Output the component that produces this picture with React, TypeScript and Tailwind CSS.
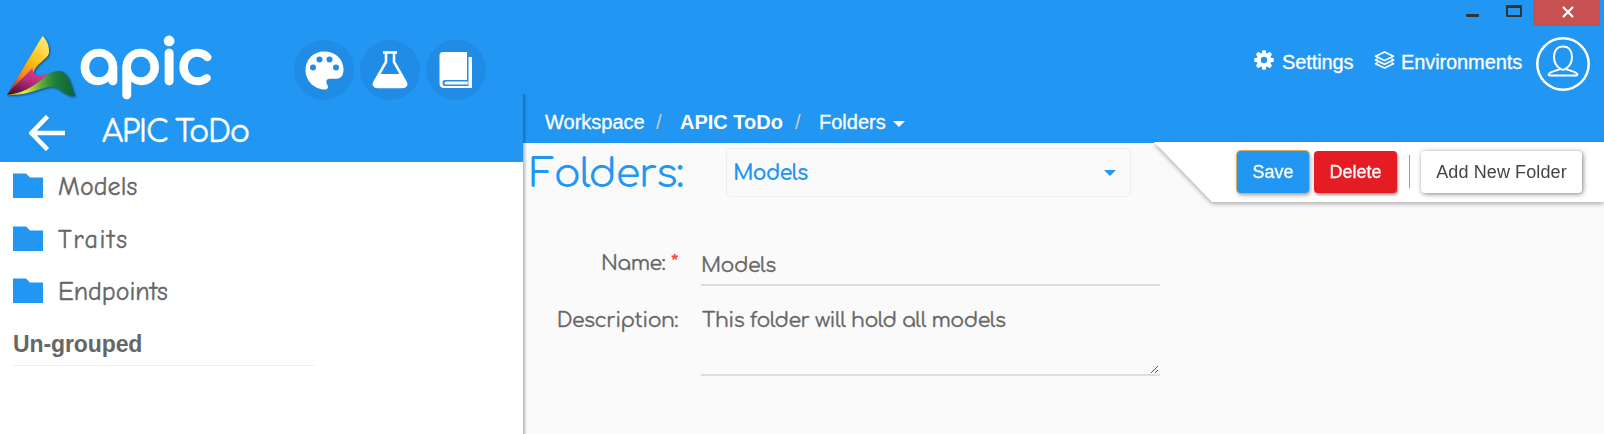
import React from "react";

const ROUND = "font-['Comfortaa','Quicksand','Lato',sans-serif]";

function Logo() {
  return (
    <svg width="72" height="64" viewBox="0 0 72 64" className="drop-shadow-[1px_1px_1px_rgba(0,0,0,0.5)]">
      <defs>
        <linearGradient id="flame" x1="0.8" y1="0" x2="0.2" y2="1">
          <stop offset="0" stopColor="#ffe873" />
          <stop offset="0.4" stopColor="#fdbe10" />
          <stop offset="0.7" stopColor="#f58220" />
          <stop offset="1" stopColor="#a01c2c" />
        </linearGradient>
        <linearGradient id="petal" x1="0.8" y1="0.1" x2="0" y2="1">
          <stop offset="0" stopColor="#e8408c" />
          <stop offset="0.45" stopColor="#b02a78" />
          <stop offset="1" stopColor="#2c0a2a" />
        </linearGradient>
        <linearGradient id="leaf" x1="0" y1="0.6" x2="1" y2="0.6">
          <stop offset="0" stopColor="#8a9a1a" />
          <stop offset="0.25" stopColor="#e8ee3a" />
          <stop offset="0.5" stopColor="#5cab3c" />
          <stop offset="0.7" stopColor="#1d7f3c" />
          <stop offset="1" stopColor="#0c6438" />
        </linearGradient>
      </defs>
      <path d="M35.500 0C40 4 42.500 10 42 17C41 23 28 28 26.500 37C20 43 10 51 0 59C8 46 18 29 35.500 0Z" fill="url(#flame)" />
      <path d="M25.500 32C25.500 37 28 39.500 34 39.500L46 37C36 49 18 58 0 59C8 49 18 40 25.500 32Z" fill="url(#petal)" />
      <path d="M0 59C16 57 26 51 35 43C43 36 51 33 57 36.500C63 41 65 52 68 60C56 61 53 49 42 51C30 53 20 60 0 59Z" fill="url(#leaf)" />
    </svg>
  );
}

function Palette() {
  return (
    <svg width="39" height="39" viewBox="0 0 39 39">
      <path d="M19 .5C8.500.5.5 8.500.5 19S9 38.500 20 38.500c2.500 0 3.200-1.500 2.800-3.300-.5-1.700-2-3.500-1.300-5.400.7-2 2.500-2 5-2h5c5 0 7.200-4.500 7-9.800C38 7.500 30 .5 19 .5Z" fill="#fff" />
      <g fill="#218ce5">
        <circle cx="8" cy="16.500" r="3" />
        <circle cx="14.500" cy="8.500" r="3" />
        <circle cx="24.500" cy="8.500" r="3" />
        <circle cx="31" cy="16.500" r="3" />
      </g>
    </svg>
  );
}

function Flask() {
  return (
    <svg width="36" height="38" viewBox="0 0 36 38">
      <path d="M11 1.500h14" stroke="#fff" strokeWidth="2.500" />
      <path d="M14 1v10L2.500 31c-1.500 3 0 5 3 5h25c3 0 4.500-2 3-5L22 11V1" fill="none" stroke="#fff" strokeWidth="2.600" />
      <path d="M7.500 23h21l5 9c1 3 0 4-3 4h-25c-3 0-4-1-3-4Z" fill="#fff" />
    </svg>
  );
}

function Book() {
  return (
    <svg width="34" height="38" viewBox="0 0 34 38">
      <path d="M4 1h24v28H6q-2.500 0-2.500 3T6 35h23.500V6H33v31H5q-4.500 0-4.500-5V4.500Q.5 1 4 1Z" fill="#fff" />
      <path d="M28.800 30.600H7a1.500 1.500 0 0 0 0 3h21.800Z" fill="#fff" />
    </svg>
  );
}

function Gear() {
  return (
    <svg width="20" height="20" viewBox="-10 -10 20 20" fill="#fff">
      <path fillRule="evenodd" d="M-7.200 0a7.200 7.200 0 1 0 14.400 0a7.200 7.200 0 1 0-14.400 0M-3.200 0a3.200 3.200 0 1 1 6.400 0a3.200 3.200 0 1 1-6.400 0" />
      {[0, 45, 90, 135, 180, 225, 270, 315].map((a) => (
        <path key={a} d="M-2.400-6L-1.700-9.800H1.700L2.400-6Z" transform={`rotate(${a})`} />
      ))}
    </svg>
  );
}

function Layers() {
  return (
    <svg width="21" height="18" viewBox="0 0 21 18" fill="none" stroke="#fff" strokeWidth="1.700" strokeLinejoin="round">
      <path d="M10.500 1L19.500 5.200L10.500 9.500L1.500 5.200Z" />
      <path d="M3.500 8L1.500 9L10.500 13.200L19.500 9L17.500 8" />
      <path d="M3.500 11.700L1.500 12.700L10.500 17L19.500 12.700L17.500 11.700" />
    </svg>
  );
}

function Avatar() {
  return (
    <svg width="54" height="54" viewBox="0 0 54 54" fill="none" stroke="#fff">
      <circle cx="27" cy="27" r="25.700" strokeWidth="2.500" />
      <path d="M24 31.500C20 29 18 25 18 20C18 13.500 21.500 9.500 27 9.500S36 13.500 36 20C36 25 34 29 30 31.500C30.500 33.500 40 34 41.500 37.500Q41.500 38.500 40 38.500H14Q12.500 38.500 12.500 37.500C14 34 23.500 33.500 24 31.500Q27 34 30 31.500" strokeWidth="2" />
    </svg>
  );
}

function Folder() {
  return (
    <svg width="30" height="25" viewBox="0 0 30 25">
      <path d="M0 .5H13L17 4.500H30V25H0Z" fill="#2196f3" />
    </svg>
  );
}

function RoundButton({ children }: { children: React.ReactNode }) {
  return <div className="flex h-[60px] w-[60px] items-center justify-center rounded-full bg-[#218ce5]">{children}</div>;
}

function FolderItem({ name, className }: { name: string; className: string }) {
  return (
    <li className="flex h-[52.500px] items-start">
      <Folder />
      <span className={`mt-[-1px] ml-[15px] font-['Comic_Neue','Lato',sans-serif] text-[26px] leading-[30px] text-[#666] [font-variant-ligatures:none] [-webkit-text-stroke:0.4px_#666] ${className}`}>{name}</span>
    </li>
  );
}

export default function App() {
  return (
    <div className="flex h-[434px] w-[1604px] flex-col overflow-hidden bg-white font-['Liberation_Sans',Arial,sans-serif]">
      <header className="relative z-10 flex h-[94px] shrink-0 justify-between bg-[#2196f3] text-white">
        <div className="flex">
          <div className="mt-[36px] ml-[7px] w-[71px]">
            <Logo />
          </div>
          <span className={`${ROUND} mt-[22px] w-[216px] text-[62px] leading-[85px] font-bold tracking-[-1.800px] [-webkit-text-stroke:2.500px_#fff]`}>apic</span>
          <div className="mt-[40px] flex gap-[6px]">
            <RoundButton><Palette /></RoundButton>
            <RoundButton><Flask /></RoundButton>
            <RoundButton><Book /></RoundButton>
          </div>
        </div>
        <div className="flex flex-col items-end">
          <div className="mr-1 flex h-[26px]">
            <div className="mt-[14px] mr-[27px] h-[3px] w-[13px] rounded-[1px] bg-[#333]" />
            <div className="mt-[5px] mr-[11px] h-[12px] w-[16px] rounded-[1px] border-2 border-t-[3px] border-[#333]" />
            <div className="flex w-[67px] items-center justify-center bg-[#c75050]">
              <svg width="12" height="12" viewBox="0 0 12 12" className="mt-[-2px] ml-[2px]">
                <path d="M1 1L11 11M11 1L1 11" stroke="#fff" strokeWidth="2.200" />
              </svg>
            </div>
          </div>
          <nav className="mr-[14px] flex text-[20px] leading-[24px]">
            <div className="mt-[24px]"><Gear /></div>
            <span className="mt-[24px] ml-[8px] w-[92px] tracking-[-0.1px] [-webkit-text-stroke:0.3px_#fff]">Settings</span>
            <div className="mt-[25px]"><Layers /></div>
            <span className="mt-[24px] ml-[6px] w-[135px] tracking-[-0.1px] [-webkit-text-stroke:0.3px_#fff]">Environments</span>
            <div className="mt-[11px]"><Avatar /></div>
          </nav>
        </div>
      </header>

      <div className="flex min-h-0 flex-1">
        <aside className="w-[523px] shrink-0 bg-white">
          <div className="flex h-[68px] bg-[#2196f3] text-white">
            <svg width="36" height="36" viewBox="0 0 36 36" className="mt-[21px] ml-[29px]">
              <path d="M36 18H3M18.500 1.500L2.500 18L18.500 34.500" fill="none" stroke="#fff" strokeWidth="4.600" />
            </svg>
            <span className={`${ROUND} mt-[20px] ml-[37px] text-[30px] leading-[38px] tracking-[-1.300px] [-webkit-text-stroke:0.4px_#fff]`}>APIC ToDo</span>
          </div>
          <ul className="mt-[11px] ml-[13px]">
            <FolderItem name="Models" className="tracking-[0.1px]" />
            <FolderItem name="Traits" className="tracking-[1.600px]" />
            <FolderItem name="Endpoints" className="tracking-[0px]" />
          </ul>
          <h2 className="mt-[-1px] ml-[13px] w-[301px] border-b border-[#eee] pb-[7px] text-[23px] leading-[28px] font-bold tracking-[-0.1px] text-[#666]">Un-grouped</h2>
        </aside>

        <main className="flex min-w-0 flex-1 flex-col bg-[#fafafa] bg-[linear-gradient(to_right,rgba(0,0,0,0.28),transparent_4px)]">
          <div className="flex h-[49px] shrink-0 bg-[#2196f3] bg-[linear-gradient(to_right,rgba(0,0,0,0.28),transparent_4px)] pt-[16px] pl-[22px] text-[20px] leading-[24px] text-white">
            <span className="w-[111px] [-webkit-text-stroke:0.3px_#fff]">Workspace</span>
            <span className="w-[24px] text-[#ccc]">/</span>
            <span className="w-[115px] font-bold">APIC ToDo</span>
            <span className="w-[24px] text-[#ccc]">/</span>
            <span className="w-[74px] [-webkit-text-stroke:0.3px_#fff]">Folders</span>
            <span className="mt-[11px] h-0 w-0 border-x-[6px] border-t-[6px] border-x-transparent border-t-white" />
          </div>

          <div className="flex h-[60px] shrink-0">
            <h1 className={`${ROUND} mt-[5px] ml-[5px] w-[198px] pl-[2px] text-[40px] leading-[52px] tracking-[-1.200px] whitespace-nowrap text-[#2196f3]`}>Folders:</h1>
            <div className={`${ROUND} mt-[5px] flex h-[49px] w-[405px] items-center justify-between rounded-[5px] border border-[#eee] pr-[14px] pl-[6px] text-[21px] font-bold tracking-[-1px] text-[#2196f3]`}>
              <span className="pt-[3px]">Models</span>
              <span className="h-0 w-0 border-x-[6px] border-t-[6px] border-x-transparent border-t-[#2196f3]" />
            </div>
            <div className="mt-[-1px] ml-[23px] h-[60px] flex-1 drop-shadow-[0_2px_2px_rgba(0,0,0,0.3)]">
              <div className="flex h-full bg-white pt-[9px] pl-[83px] text-[18px] [clip-path:polygon(0_0,100%_0,100%_100%,58px_100%)]">
                <button className="h-[42px] w-[72px] rounded-[4px] bg-[#2196f3] text-white shadow-[0_0_0_1px_#d9b062,1px_2px_4px_rgba(0,0,0,0.4)] [-webkit-text-stroke:0.3px_#fff]">Save</button>
                <button className="ml-[5px] h-[42px] w-[83px] rounded-[4px] bg-[#e51c23] text-white shadow-[1px_2px_3px_rgba(0,0,0,0.4)] [-webkit-text-stroke:0.3px_#fff]">Delete</button>
                <div className="mt-[4px] ml-[12px] h-[33px] w-px bg-[#999]" />
                <button className="ml-[11px] h-[42px] w-[161px] rounded-[4px] bg-white tracking-[0.1px] whitespace-nowrap text-[#444] shadow-[1px_1px_5px_rgba(0,0,0,0.5)]">Add New Folder</button>
              </div>
            </div>
          </div>

          <form className={`${ROUND} mt-[45px] flex flex-col text-[20.500px] leading-[26px] tracking-[-0.500px] text-[#666] [-webkit-text-stroke:0.3px_#666]`}>
            <div className="flex h-[56px]">
              <label className="mt-[3px] w-[155px] text-right whitespace-nowrap">
                Name: <span className="text-[#f44336] [-webkit-text-stroke:0.3px_#f44336]">*</span>
              </label>
              <div className="ml-[23px] h-[38px] w-[459px] border-b-2 border-[#ddd] pt-[5px]">Models</div>
            </div>
            <div className="flex">
              <label className="mt-[4px] w-[155px] text-right">Description:</label>
              <div className="ml-[23px] flex h-[72px] w-[459px] justify-between border-b-2 border-[#ddd] pt-[4px] pl-px">
                <span>This folder will hold all models</span>
                <svg width="9" height="9" viewBox="0 0 9 9" className="mr-[1px] self-end">
                  <path d="M1 8L8 1M5 8L8 5" stroke="#555" strokeWidth="1" />
                </svg>
              </div>
            </div>
          </form>
        </main>
      </div>
    </div>
  );
}
